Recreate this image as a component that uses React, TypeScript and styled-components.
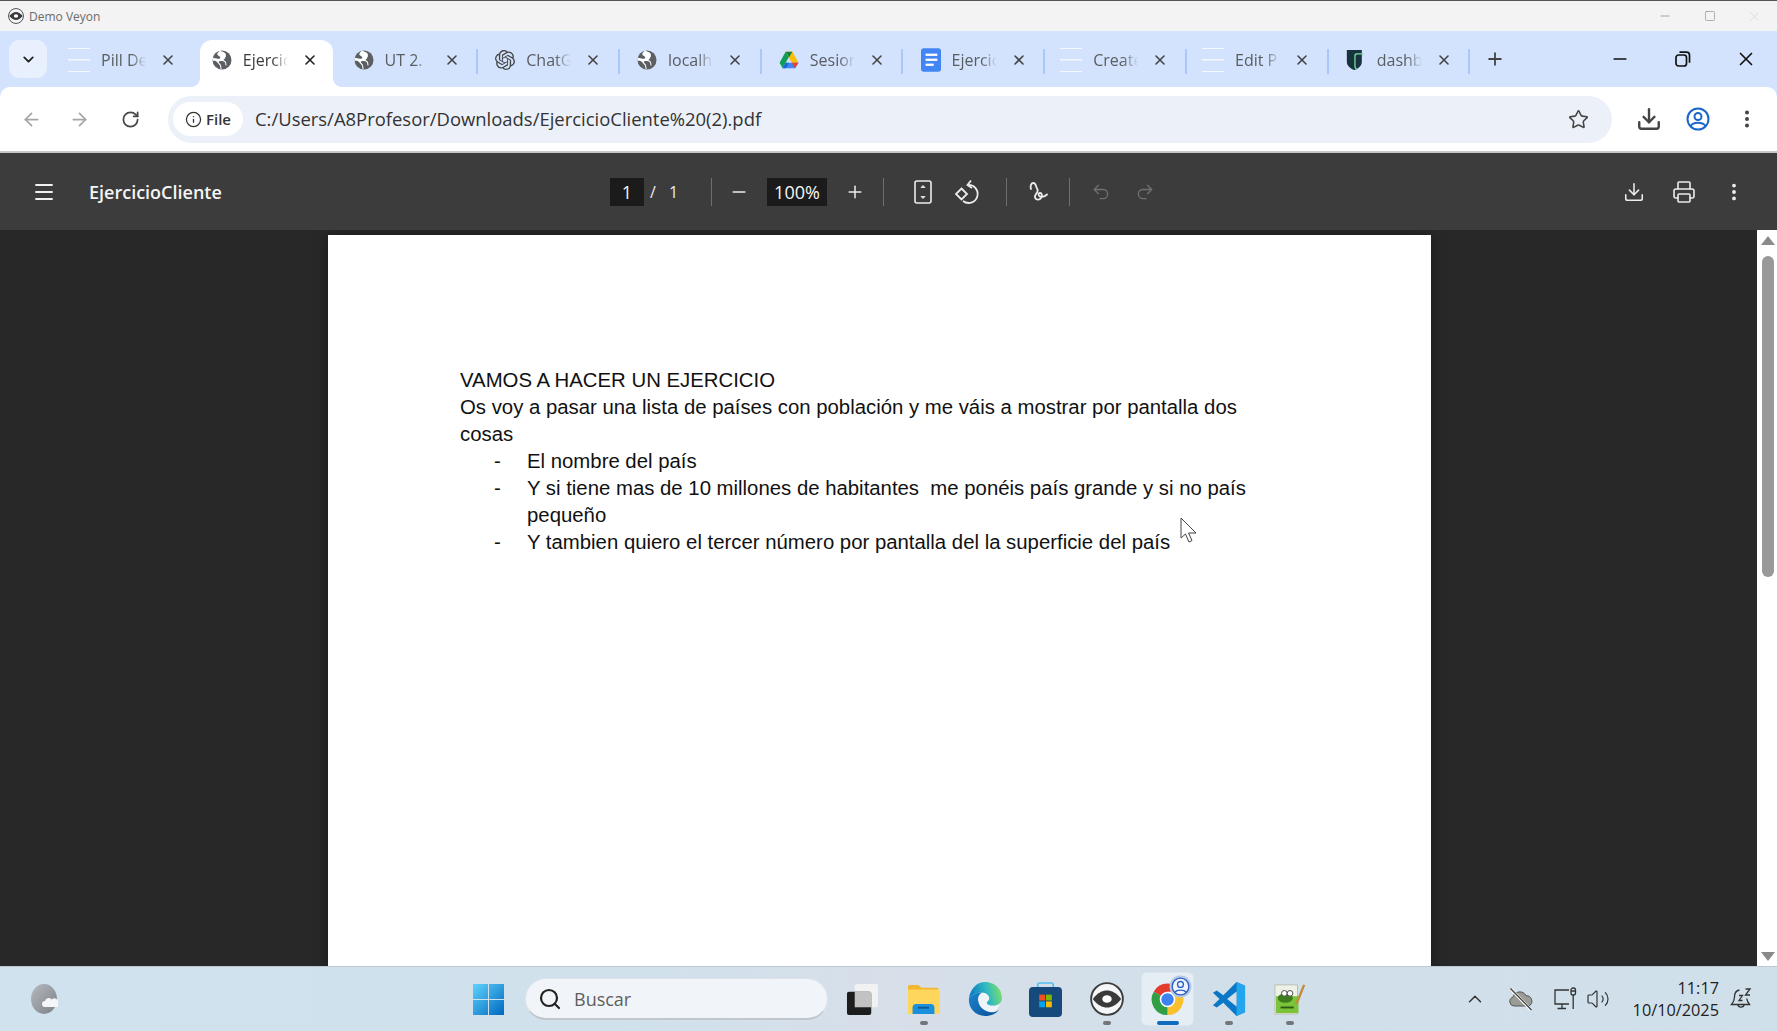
import { ReactNode } from "react";
import styled, { createGlobalStyle } from "styled-components";
import {
  ArrowLeft,
  ArrowRight,
  ChevronDown,
  ChevronUp,
  Download,
  Info,
  Menu,
  Minus,
  MoreVertical,
  Plus,
  Printer,
  Redo2,
  RotateCw,
  Search,
  Square,
  Star,
  Undo2,
  Volume2,
  X,
} from "lucide-react";
import { SiOpenai } from "react-icons/si";

const GlobalStyle = createGlobalStyle`
  html, body {
    margin: 0;
    padding: 0;
    width: 1777px;
    height: 1031px;
    overflow: hidden;
    background: #282828;
    font-family: "Open Sans", "Noto Sans", sans-serif;
  }
  * { box-sizing: border-box; }
`;

const Screen = styled.div`
  width: 1777px;
  height: 1031px;
  display: flex;
  flex-direction: column;
  border-top: 1px solid #555;
  overflow: hidden;
`;

const TitleBar = styled.div`
  height: 30px;
  flex: none;
  background: #f3f3f3;
  display: flex;
  align-items: center;
  padding-left: 8px;
  color: #6b6b6b;
  font-size: 12px;
`;

const TitleText = styled.span`
  margin-left: 5px;
`;

const TitleControls = styled.div`
  margin-left: auto;
  display: flex;
  color: #8a8a8a;
`;

const TitleControl = styled.div<{ $dim?: boolean }>`
  width: 45px;
  height: 30px;
  display: flex;
  align-items: center;
  justify-content: center;
  color: ${(p) => (p.$dim ? "#cfcfcf" : "#6f6f6f")};
`;

const ChromeFrame = styled.div`
  background: #d3e3fd;
  flex: none;
`;

const TabStrip = styled.div`
  height: 56px;
  display: flex;
  align-items: flex-start;
  padding: 9px 0 0 9px;
`;

const TabListButton = styled.div`
  width: 38px;
  height: 38px;
  margin-right: 5px;
  border-radius: 10px;
  background: #e9f0fd;
  display: flex;
  align-items: center;
  justify-content: center;
  color: #222;
`;

const Tab = styled.div<{ $active?: boolean; $divider?: boolean }>`
  position: relative;
  flex: none;
  width: 133px;
  height: 47px;
  margin: 0 2.75px 0 6px;
  padding: 0 0 7px 12px;
  display: flex;
  align-items: center;
  border-radius: 12px 12px 0 0;
  background: ${(p) => (p.$active ? "#fff" : "transparent")};

  &::after {
    content: ${(p) => (p.$divider ? '""' : "none")};
    position: absolute;
    right: -3.5px;
    top: 9px;
    width: 2px;
    height: 25px;
    background: #a8c7fa;
  }

  &::before {
    content: ${(p) => (p.$active ? '""' : "none")};
    position: absolute;
    left: -10px;
    right: -10px;
    bottom: 0;
    height: 10px;
    background:
      radial-gradient(circle at 0 0, transparent 10px, #fff 10.5px) left bottom / 10px 10px no-repeat,
      radial-gradient(circle at 100% 0, transparent 10px, #fff 10.5px) right bottom / 10px 10px no-repeat;
  }
`;

const Favicon = styled.div`
  width: 20px;
  height: 22px;
  flex: none;
  display: flex;
  align-items: center;
  justify-content: center;
`;

const BlankLines = styled.div`
  width: 22px;
  height: 24px;
  flex: none;
  margin: 0 -1px 0 -3px;
  border-top: 1.5px solid #f4f8ff;
  border-bottom: 1.5px solid #f4f8ff;
  background: linear-gradient(#f4f8ff, #f4f8ff) center / 100% 1.5px no-repeat;
`;

const TabTitle = styled.div<{ $active?: boolean }>`
  width: 45px;
  margin-left: 11px;
  overflow: hidden;
  white-space: nowrap;
  font-size: 16px;
  line-height: 22px;
  color: ${(p) => (p.$active ? "#3c3c3c" : "#5a5d61")};
  -webkit-mask-image: linear-gradient(to right, #000 66%, transparent 100%);
  mask-image: linear-gradient(to right, #000 66%, transparent 100%);
`;

const TabClose = styled.div<{ $active?: boolean }>`
  width: 16px;
  height: 16px;
  margin-left: 14px;
  flex: none;
  display: flex;
  align-items: center;
  justify-content: center;
  color: ${(p) => (p.$active ? "#222" : "#444")};
`;

const NewTab = styled.div`
  width: 50px;
  height: 38px;
  flex: none;
  display: flex;
  align-items: center;
  justify-content: center;
  color: #444;
`;

const WindowControls = styled.div`
  margin-left: auto;
  display: flex;
`;

const WindowControl = styled.div`
  width: 63px;
  height: 38px;
  display: flex;
  align-items: center;
  justify-content: center;
  color: #111;
`;

const Toolbar = styled.div`
  height: 64px;
  background: #fff;
  border-radius: 10px 10px 0 0;
  display: flex;
  align-items: center;
  padding: 0 5px 0 8px;
`;

const NavButton = styled.div<{ $muted?: boolean; $gap?: number }>`
  width: 46px;
  height: 40px;
  flex: none;
  margin-left: ${(p) => p.$gap ?? 0}px;
  display: flex;
  align-items: center;
  justify-content: center;
  color: ${(p) => (p.$muted ? "#a3a5a8" : "#474747")};
`;

const AddressBar = styled.div`
  flex: 1;
  height: 47px;
  margin: 0 13px 0 15px;
  padding: 0 23px 0 5px;
  border-radius: 24px;
  background: #ecf0f9;
  display: flex;
  align-items: center;
`;

const SiteChip = styled.div`
  width: 70px;
  height: 34px;
  border-radius: 17px;
  background: #fff;
  display: flex;
  align-items: center;
  justify-content: center;
  gap: 4px;
  font-size: 15px;
  font-weight: 600;
  color: #333;
`;

const UrlText = styled.div`
  margin-left: 12px;
  padding-bottom: 2px;
  font-size: 18.45px;
  color: #333;
  flex: 1;
  white-space: nowrap;
`;

const ActionButton = styled.div<{ $color?: string }>`
  width: 48px;
  height: 40px;
  flex: none;
  margin-right: 1px;
  display: flex;
  align-items: center;
  justify-content: center;
  color: ${(p) => p.$color ?? "#444"};
`;

const PdfBar = styled.div`
  height: 79px;
  flex: none;
  background: #3c3c3c;
  border-top: 2px solid #c7c7c7;
  display: flex;
  align-items: center;
  color: #f1f1f1;
`;

const PdfMenu = styled.div`
  width: 89px;
  flex: none;
  padding-left: 32px;
  display: flex;
  align-items: center;
`;

const PdfTitle = styled.div`
  width: 521px;
  flex: none;
  font-size: 18px;
  font-weight: 600;
  color: #f5f5f5;
`;

const BoxedValue = styled.div<{ $width: number; $gap?: number }>`
  width: ${(p) => p.$width}px;
  height: 28px;
  flex: none;
  margin: 0 ${(p) => p.$gap ?? 0}px;
  background: #1b1b1b;
  display: flex;
  align-items: center;
  justify-content: center;
  font-size: 18px;
  color: #f5f5f5;
`;

const PageTotal = styled.div`
  width: 61px;
  flex: none;
  padding-left: 6px;
  display: flex;
  font-size: 16px;
  color: #e8edf5;
  word-spacing: 9px;
`;

const Separator = styled.div<{ $left: number; $right: number }>`
  width: 1px;
  height: 28px;
  flex: none;
  margin: 0 ${(p) => p.$right}px 0 ${(p) => p.$left}px;
  background: #6e6e6e;
`;

const PdfButton = styled.div<{ $off?: boolean }>`
  width: 44px;
  height: 40px;
  flex: none;
  display: flex;
  align-items: center;
  justify-content: center;
  color: ${(p) => (p.$off ? "#707070" : "#ececec")};
`;

const PdfActions = styled.div`
  margin-left: auto;
  margin-right: 21px;
  display: flex;
  gap: 6px;
`;

const Viewer = styled.div`
  flex: 1;
  min-height: 0;
  display: flex;
  background: #282828;
`;

const PageArea = styled.div`
  flex: 1;
  display: flex;
  padding: 5px 0 0 328px;
  overflow: hidden;
`;

const Paper = styled.div`
  position: relative;
  width: 1103px;
  height: 1400px;
  flex: none;
  background: #fff;
  padding: 132px 0 0 132px;
  box-shadow: 0 0 14px rgba(0, 0, 0, 0.35);
  color: #111;
  font-family: "Liberation Sans", Arial, sans-serif;
  font-size: 20.35px;
  line-height: 27px;
`;

const DocLine = styled.div`
  white-space: pre;
`;

const DocList = styled.ul`
  list-style: none;
  margin: 0;
  padding: 0 0 0 67px;
  width: 800px;
`;

const DocItem = styled.li`
  position: relative;
  white-space: pre-wrap;

  &::before {
    content: "-";
    position: absolute;
    left: -33px;
  }
`;

const MouseCursor = styled.svg`
  position: absolute;
  left: 852px;
  top: 282px;
`;

const ScrollTrack = styled.div`
  width: 20px;
  flex: none;
  background: #fff;
  display: flex;
  flex-direction: column;
  align-items: center;
  padding: 6px 0 0 2px;
`;

const ScrollArrow = styled.div<{ $down?: boolean }>`
  width: 0;
  height: 0;
  flex: none;
  border-left: 7px solid transparent;
  border-right: 7px solid transparent;
  ${(p) => (p.$down ? "border-top: 9px solid #8a8a8a;" : "border-bottom: 9px solid #8a8a8a;")}
`;

const ScrollThumb = styled.div`
  width: 12px;
  height: 321px;
  flex: none;
  margin: 11px 0 auto;
  border-radius: 6px;
  background: #999;
`;

const ScrollEnd = styled.div`
  height: 5px;
  flex: none;
`;

const Taskbar = styled.div`
  height: 65px;
  flex: none;
  display: flex;
  align-items: center;
  border-top: 1px solid #bcc8d2;
  background: linear-gradient(90deg, #cfe2ed 0%, #d0e1ec 35%, #d7dfe9 50%, #d1dfea 70%, #d0e0eb 100%);
`;

const WeatherSlot = styled.div`
  width: 458px;
  flex: none;
  padding-left: 29px;
  display: flex;
  align-items: center;
`;

const StartSlot = styled.div`
  width: 60px;
  flex: none;
  display: flex;
  justify-content: center;
`;

const SearchBox = styled.div`
  width: 303px;
  height: 42px;
  flex: none;
  margin: 0 4px 0 7px;
  padding-left: 12px;
  border-radius: 21px;
  background: #f1f5f9;
  border: 1px solid #dde3e8;
  border-bottom: 2px solid #bfc6cc;
  display: flex;
  align-items: center;
  gap: 12px;
  color: #5e5e5e;
  font-size: 18px;
`;

const PinnedApp = styled.div<{ $active?: boolean }>`
  position: relative;
  width: ${(p) => (p.$active ? 51 : 61)}px;
  height: 52px;
  flex: none;
  margin: 0 ${(p) => (p.$active ? 5 : 0)}px;
  border-radius: 5px;
  display: flex;
  align-items: center;
  justify-content: center;
  background: ${(p) => (p.$active ? "#e6eef5" : "transparent")};
  box-shadow: ${(p) => (p.$active ? "0 0 0 1px #dde6ee" : "none")};
`;

const RunDot = styled.div<{ $active?: boolean }>`
  position: absolute;
  left: 50%;
  bottom: 0;
  transform: translateX(-50%);
  width: ${(p) => (p.$active ? 22 : 8)}px;
  height: 4px;
  border-radius: 2px;
  background: ${(p) => (p.$active ? "#0f6cbd" : "#73777c")};
`;

const Tray = styled.div`
  margin-left: auto;
  display: flex;
  align-items: center;
  color: #333;
`;

const TrayIcon = styled.div<{ $width: number }>`
  width: ${(p) => p.$width}px;
  flex: none;
  display: flex;
  justify-content: center;
`;

const Clock = styled.div`
  width: 109px;
  flex: none;
  text-align: right;
  font-size: 16.3px;
  line-height: 22px;
  color: #222;
`;

const BellSlot = styled.div`
  width: 58px;
  padding-right: 14px;
  flex: none;
  display: flex;
  justify-content: center;
`;

function GlobeIcon() {
  return (
    <svg width="20" height="20" viewBox="0 0 20 20">
      <circle cx="10" cy="10" r="9.5" fill="#5b5e62" />
      <path
        d="M8 .8c-1.400 1.200-2.700 2.200-2.700 3.500 0 1.100 1.500 1.500 2.600 2.400 1 .8.300 2-.8 2.100-1.700.2-3.300-1.200-6.200-.8L.5 11c1.800-.5 3.200-.3 4.500 1.100 1.200 1.300 1.900 2.600 3 3.200l.6 3.800h1l-.6-4c-.5-1.300-2.300-2.100-2.300-3.300 0-.8 2.600-.8 4.300-.6 1.300.2 2.100 1.200 2.300 2.400l.2 2h1l-.2-2.200c-.2-1.700-1.400-3-3-3.300 1.700-1.500 2.900-3.300 2.600-5.600-.1-1.200-2-2.500-5.500-3.700z"
        fill="#fff"
      />
    </svg>
  );
}

function DriveIcon() {
  return (
    <svg width="22" height="20" viewBox="0 0 22 20">
      <path d="M7.300 1 .6 13l3.400 6L10.800 7z" fill="#0f9d58" />
      <path d="M7.300 1h7.400l6.700 12H14z" fill="#fbbc04" />
      <path d="M4 19h13.700l3.700-6H7.400z" fill="#4285f4" />
      <path d="M7.300 1h7.400L11 7.300z" fill="#188038" />
      <path d="M17.700 19l3.700-6H14z" fill="#ea4335" />
      <path d="M7.400 13 4 19h3.500L11 13z" fill="#1967d2" />
    </svg>
  );
}

function DocsIcon() {
  return (
    <svg width="22" height="26" viewBox="0 0 22 26">
      <rect x="0" y="0" width="22" height="26" rx="3" fill="#4285f4" />
      <rect x="5" y="6" width="13" height="2.500" fill="#fff" />
      <rect x="5" y="11.500" width="13" height="2.500" fill="#fff" />
      <rect x="5" y="17" width="9" height="2.500" fill="#fff" />
    </svg>
  );
}

function ShieldIcon() {
  return (
    <svg width="24" height="26" viewBox="0 0 24 26">
      <path d="M1 1h18v14c0 5-4 8-9 10-5-2-9-5-9-10z" fill="#17333d" />
      <path d="M10 8c0-2 1-3 3-3h8v1.500h-7c-1.500 0-2.500.8-2.500 2v11c0 2 .5 3 2 4l-1 1.500c-2-1.200-2.500-3-2.500-5z" fill="#7fe0a8" />
    </svg>
  );
}

function VeyonMark({ size }: { size: number }) {
  return (
    <svg width={size} height={size} viewBox="0 0 36 36">
      <circle cx="18" cy="18" r="16.800" fill="#f4f6f8" stroke="#3d3d3d" strokeWidth="2" />
      <path d="M3 18c5-6.500 10-9 15-9s10 2.500 15 9c-5 6.500-10 9-15 9S8 24.500 3 18z" fill="#3a3a3a" />
      <ellipse cx="18" cy="18" rx="5" ry="4" fill="#fff" />
    </svg>
  );
}

function WindowsIcon() {
  return (
    <svg width="33" height="33" viewBox="0 0 34 34">
      <defs>
        <linearGradient id="win" x1="0" y1="0" x2="1" y2="1">
          <stop offset="0" stopColor="#5fd3fb" />
          <stop offset="1" stopColor="#0067c0" />
        </linearGradient>
      </defs>
      <path d="M1 1h15.500v15.500H1zM17.500 1H33v15.500H17.500zM1 17.500h15.500V33H1zM17.500 17.500H33V33H17.500z" fill="url(#win)" />
    </svg>
  );
}

function TaskViewIcon() {
  return (
    <svg width="33" height="33" viewBox="0 0 34 34">
      <rect x="9" y="1" width="24" height="24" rx="2" fill="#f2f2f2" />
      <rect x="1" y="9" width="25" height="24" rx="2" fill="#1d1d1d" />
      <rect x="9" y="9" width="17" height="16" fill="#c2c2c2" />
    </svg>
  );
}

function ExplorerIcon() {
  return (
    <svg width="33" height="31" viewBox="0 0 36 34">
      <path d="M1 3a2 2 0 0 1 2-2h9l4 3h18a2 2 0 0 1 0 2v26H1z" fill="#f2b62f" />
      <rect x="1" y="6" width="35" height="27" rx="1.500" fill="#ffd65c" />
      <path d="M6 33v-7a4 4 0 0 1 4-4h16a4 4 0 0 1 4 4v7z" fill="#1a8fdc" />
      <rect x="12" y="25" width="12" height="2" fill="#0b5a95" />
    </svg>
  );
}

function EdgeIcon() {
  return (
    <svg width="34" height="34" viewBox="0 0 36 36">
      <defs>
        <linearGradient id="edgeTop" x1="0" y1="0.6" x2="1" y2="0.4">
          <stop offset="0" stopColor="#0c74bd" />
          <stop offset="0.55" stopColor="#2db8c4" />
          <stop offset="1" stopColor="#7fe06a" />
        </linearGradient>
        <linearGradient id="edgeBody" x1="0" y1="0" x2="1" y2="1">
          <stop offset="0" stopColor="#1a86d0" />
          <stop offset="1" stopColor="#0b4f96" />
        </linearGradient>
      </defs>
      <path d="M15 11c4 0 8 3 7.500 7-.5 2-2.500 3-2.500 4 0 2 3 3 7 3 3 0 6-1 7-3-1 4-3 9-9 10-7 0-13-5-14-11-1-4 0-8 4-10z" fill="#eef4f8" />
      <path d="M1 17C3 6 10 0 18 0c10 0 18 7 18 17 0 5-4 8-9 8-4 0-7-1-7-3 0-1 2-2 2.500-4 .5-4-3.500-7-7.500-7-6 0-11 2-14 6z" fill="url(#edgeTop)" />
      <path d="M1 17c3-4 8-6 14-6-4 2-5 6-4 10 1 6 7 11 14 11 3 0 6-1 8-3-3 4-8 7-15 7C8 36 0 28 1 17z" fill="url(#edgeBody)" />
    </svg>
  );
}

function StoreIcon() {
  return (
    <svg width="33" height="35" viewBox="0 0 34 36">
      <path d="M9 6V3a2 2 0 0 1 2-2h12a2 2 0 0 1 2 2v3" fill="none" stroke="#4fc1f0" strokeWidth="1.800" />
      <rect x="0" y="5" width="34" height="31" rx="4" fill="#174a7c" />
      <rect x="10.500" y="13" width="6" height="6" fill="#f25022" />
      <rect x="17.500" y="13" width="6" height="6" fill="#7fba00" />
      <rect x="10.500" y="20" width="6" height="6" fill="#00a4ef" />
      <rect x="17.500" y="20" width="6" height="6" fill="#ffb900" />
    </svg>
  );
}

function ChromeIcon() {
  return (
    <svg width="33" height="33" viewBox="0 0 36 36">
      <path d="M18 18 3 9.500A17 17 0 0 1 33 9.500H18z" fill="#e33b2e" />
      <path d="M18 18 33 9.500A17 17 0 0 1 18 35z" fill="#fbc02d" />
      <path d="M18 18v17A17 17 0 0 1 3 9.500z" fill="#2f9e44" />
      <circle cx="18" cy="18" r="8.500" fill="#fff" />
      <circle cx="18" cy="18" r="6.800" fill="#3e82f1" />
    </svg>
  );
}

function ProfileBadge() {
  return (
    <svg width="23" height="23" viewBox="0 0 22 22">
      <circle cx="11" cy="11" r="10.500" fill="#b7c7e6" />
      <circle cx="11" cy="11" r="8" fill="#eef3fc" stroke="#2d62c4" strokeWidth="1.300" />
      <circle cx="11" cy="9" r="2.800" fill="none" stroke="#2d62c4" strokeWidth="1.300" />
      <path d="M5.500 16.500c2-2.800 9-2.800 11 0" fill="none" stroke="#2d62c4" strokeWidth="1.300" />
    </svg>
  );
}

const ChromeBadge = styled.div`
  position: absolute;
  top: 2px;
  right: 1px;
`;

function VsCodeIcon() {
  return (
    <svg width="34" height="34" viewBox="0 0 36 36">
      <path d="M26 0 12 14 5 9l-4 2.500L8 18l-7 6.500L5 27l7-5 14 14 9-4V4z" fill="#0a78c7" />
      <path d="M26 0v36l9-4V4z" fill="#24a6ee" />
      <path d="M26 10v16l-10-8z" fill="#d3e0ea" />
    </svg>
  );
}

function NotepadIcon() {
  return (
    <svg width="32" height="32" viewBox="0 0 34 34">
      <rect x="1" y="2" width="24" height="31" fill="#eef2e6" stroke="#b9beb0" />
      <rect x="2" y="14" width="24" height="18" fill="#7cc23a" />
      <ellipse cx="12" cy="16" rx="8" ry="5" fill="#3e7d1d" />
      <circle cx="11" cy="11" r="3" fill="#fff" stroke="#444" />
      <circle cx="17" cy="11" r="3" fill="#fff" stroke="#444" />
      <path d="M7 26h14" stroke="#2c5c14" strokeWidth="2" />
      <path d="M24 22 32 2" stroke="#c48a3a" strokeWidth="2.500" />
    </svg>
  );
}

function WeatherIcon() {
  return (
    <svg width="30" height="32" viewBox="0 0 30 32">
      <defs>
        <linearGradient id="moon" x1="0" y1="0" x2="1" y2="1">
          <stop offset="0" stopColor="#b5bac0" />
          <stop offset="1" stopColor="#7d8186" />
        </linearGradient>
      </defs>
      <ellipse cx="15" cy="16" rx="13" ry="15" fill="url(#moon)" />
      <path d="M16 24a3 3 0 0 1 0-6 4 4 0 0 1 7-1.500 3.500 3.500 0 0 1 6 3V24z" fill="#f4f6f8" />
    </svg>
  );
}

function OneDriveOff() {
  return (
    <svg width="26" height="24" viewBox="0 0 26 24">
      <path d="M6 19a4.500 4.500 0 0 1-1-8.800 7 7 0 0 1 13-1.500 5.500 5.500 0 0 1 3 10.300z" fill="#9c9c96" stroke="#555" strokeWidth="1" />
      <path d="M3 2l20 21" stroke="#fff" strokeWidth="3" />
      <path d="M2.500 1.500l21 21.500" stroke="#444" strokeWidth="1.400" />
    </svg>
  );
}

function NetworkIcon() {
  return (
    <svg width="24" height="24" viewBox="0 0 24 24" fill="none" stroke="#333" strokeWidth="1.300">
      <path d="M16 3H2v14h14" />
      <path d="M9 17v4M4.500 21.500H13" />
      <rect x="18" y="1" width="4.500" height="7" rx="2" />
      <path d="M20.200 8v14M18 4h4.500" />
    </svg>
  );
}

function BellZzz() {
  return (
    <svg width="22" height="24" viewBox="0 0 22 24" fill="none" stroke="#333" strokeWidth="1.300">
      <path d="M9.500 3C6 3.500 4.500 6.500 4.500 10c0 3-1 5-3 7.500h18c-1.500-2-2.500-3.800-2.800-6" />
      <path d="M8 17.500c0 3.500 6 3.500 6 0" />
      <path d="M9 8.500h3.500L9 13.500h3.500" />
      <path d="M15.500 2h4.500l-4.500 6H20" />
    </svg>
  );
}

function FitPageIcon() {
  return (
    <svg width="18" height="24" viewBox="0 0 18 24" fill="none" stroke="currentColor" strokeWidth="1.600">
      <rect x="1" y="1" width="16" height="22" rx="2" />
      <path d="M7 7.500 9 5.500l2 2zM7 16.500l2 2 2-2z" fill="currentColor" strokeWidth="0.800" />
    </svg>
  );
}

function RotatePageIcon() {
  return (
    <svg width="26" height="26" viewBox="0 0 26 26" fill="none" stroke="currentColor" strokeWidth="1.800">
      <path d="M14 6a9 9 0 1 1-5 16" />
      <path d="M17 1.500 13.500 6l4.500 3" />
      <path d="M7.500 9.500 13 15l-5.500 5.500L2 15z" />
    </svg>
  );
}

function DrawIcon() {
  return (
    <svg width="24" height="24" viewBox="0 0 24 24" fill="none" stroke="currentColor" strokeWidth="1.800" strokeLinecap="round">
      <path d="M5 9c-1-3 0-6 2.500-6 2.500 0 2 3 4 6.500 1.500 3-3.500 5-2.500 8 .7 2.500 4.500 3 6 .5 1.500-2.500 1-5-1-5-2.500 0-1.500 4 1.500 4 2 0 4-1 5.500-2.500" />
    </svg>
  );
}

function Cursor() {
  return (
    <MouseCursor width="18" height="26" viewBox="0 0 18 26">
      <path d="M1 1v20l4.500-4 3.500 8 3-1.500-3.500-7.500H16z" fill="#fff" stroke="#444" strokeWidth="1" />
    </MouseCursor>
  );
}

type TabItem = { icon: ReactNode; title: string; active?: boolean; divider?: boolean };

const tabs: TabItem[] = [
  { icon: <BlankLines />, title: "Pill De" },
  { icon: <GlobeIcon />, title: "Ejercicio", active: true },
  { icon: <GlobeIcon />, title: "UT 2. ", divider: true },
  { icon: <SiOpenai size={20} color="#444" />, title: "ChatGPT", divider: true },
  { icon: <GlobeIcon />, title: "localhost", divider: true },
  { icon: <DriveIcon />, title: "Sesiones", divider: true },
  { icon: <DocsIcon />, title: "Ejercicio", divider: true },
  { icon: <BlankLines />, title: "Create", divider: true },
  { icon: <BlankLines />, title: "Edit P", divider: true },
  { icon: <ShieldIcon />, title: "dashboard", divider: true },
];

const docLines = [
  "VAMOS A HACER UN EJERCICIO",
  "Os voy a pasar una lista de países con población y me váis a mostrar por pantalla dos",
  "cosas",
];

const docItems = [
  "El nombre del país",
  "Y si tiene mas de 10 millones de habitantes  me ponéis país grande y si no país\npequeño",
  "Y tambien quiero el tercer número por pantalla del la superficie del país",
];

const pinned: { key: string; icon: ReactNode; dot?: boolean; active?: boolean; badge?: boolean }[] = [
  { key: "view", icon: <TaskViewIcon /> },
  { key: "files", icon: <ExplorerIcon />, dot: true },
  { key: "edge", icon: <EdgeIcon /> },
  { key: "store", icon: <StoreIcon /> },
  { key: "veyon", icon: <VeyonMark size={34} />, dot: true },
  { key: "chrome", icon: <ChromeIcon />, dot: true, active: true, badge: true },
  { key: "code", icon: <VsCodeIcon />, dot: true },
  { key: "npp", icon: <NotepadIcon />, dot: true },
];

export default function App() {
  return (
    <>
      <GlobalStyle />
      <Screen>
        <TitleBar>
          <VeyonMark size={16} />
          <TitleText>Demo Veyon</TitleText>
          <TitleControls>
            <TitleControl>
              <Minus size={14} strokeWidth={1} />
            </TitleControl>
            <TitleControl>
              <Square size={12} strokeWidth={1} />
            </TitleControl>
            <TitleControl $dim>
              <X size={15} strokeWidth={1} />
            </TitleControl>
          </TitleControls>
        </TitleBar>

        <ChromeFrame>
          <TabStrip>
            <TabListButton>
              <ChevronDown size={17} strokeWidth={2.6} />
            </TabListButton>
            {tabs.map((tab, i) => (
              <Tab key={i} $active={tab.active} $divider={tab.divider}>
                <Favicon>{tab.icon}</Favicon>
                <TabTitle $active={tab.active}>{tab.title}</TabTitle>
                <TabClose $active={tab.active}>
                  <X size={16} strokeWidth={2.4} />
                </TabClose>
              </Tab>
            ))}
            <NewTab>
              <Plus size={20} strokeWidth={2.2} />
            </NewTab>
            <WindowControls>
              <WindowControl>
                <Minus size={20} strokeWidth={2} />
              </WindowControl>
              <WindowControl>
                <svg width="16" height="16" viewBox="0 0 16 16" fill="none" stroke="currentColor" strokeWidth="1.700">
                  <rect x="1" y="4" width="10.500" height="11" rx="2.500" />
                  <path d="M4.500 1.200h7a3 3 0 0 1 3 3v7.500" />
                </svg>
              </WindowControl>
              <WindowControl>
                <X size={22} strokeWidth={1.8} />
              </WindowControl>
            </WindowControls>
          </TabStrip>

          <Toolbar>
            <NavButton $muted>
              <ArrowLeft size={21} strokeWidth={2} />
            </NavButton>
            <NavButton $muted $gap={2}>
              <ArrowRight size={21} strokeWidth={2} />
            </NavButton>
            <NavButton $gap={5}>
              <RotateCw size={19} strokeWidth={2.2} />
            </NavButton>
            <AddressBar>
              <SiteChip>
                <Info size={17} strokeWidth={1.8} />
                File
              </SiteChip>
              <UrlText>C:/Users/A8Profesor/Downloads/EjercicioCliente%20(2).pdf</UrlText>
              <Star size={21} strokeWidth={1.8} color="#444" />
            </AddressBar>
            <ActionButton>
              <Download size={26} strokeWidth={2.2} />
            </ActionButton>
            <ActionButton $color="#1a66c9">
              <svg width="24" height="24" viewBox="0 0 24 24" fill="none" stroke="currentColor" strokeWidth="2">
                <circle cx="12" cy="12" r="10.500" />
                <circle cx="12" cy="9.500" r="3.500" />
                <path d="M4.500 19c2.500-4.500 12.500-4.500 15 0" />
              </svg>
            </ActionButton>
            <ActionButton>
              <MoreVertical size={22} strokeWidth={2.4} />
            </ActionButton>
          </Toolbar>
        </ChromeFrame>

        <PdfBar>
          <PdfMenu>
            <Menu size={24} strokeWidth={1.8} />
          </PdfMenu>
          <PdfTitle>EjercicioCliente</PdfTitle>
          <BoxedValue $width={34}>1</BoxedValue>
          <PageTotal>/ 1</PageTotal>
          <Separator $left={6} $right={5} />
          <PdfButton>
            <Minus size={20} strokeWidth={1.8} />
          </PdfButton>
          <BoxedValue $width={60} $gap={6}>100%</BoxedValue>
          <PdfButton>
            <Plus size={20} strokeWidth={1.8} />
          </PdfButton>
          <Separator $left={6} $right={17} />
          <PdfButton>
            <FitPageIcon />
          </PdfButton>
          <PdfButton>
            <RotatePageIcon />
          </PdfButton>
          <Separator $left={17} $right={9} />
          <PdfButton>
            <DrawIcon />
          </PdfButton>
          <Separator $left={9} $right={9} />
          <PdfButton $off>
            <Undo2 size={20} strokeWidth={1.6} />
          </PdfButton>
          <PdfButton $off>
            <Redo2 size={20} strokeWidth={1.6} />
          </PdfButton>
          <PdfActions>
            <PdfButton>
              <Download size={22} strokeWidth={1.7} />
            </PdfButton>
            <PdfButton>
              <Printer size={24} strokeWidth={1.6} />
            </PdfButton>
            <PdfButton>
              <MoreVertical size={22} strokeWidth={2.2} />
            </PdfButton>
          </PdfActions>
        </PdfBar>

        <Viewer>
          <PageArea>
            <Paper>
              {docLines.map((line) => (
                <DocLine key={line}>{line}</DocLine>
              ))}
              <DocList>
                {docItems.map((item) => (
                  <DocItem key={item}>{item}</DocItem>
                ))}
              </DocList>
              <Cursor />
            </Paper>
          </PageArea>
          <ScrollTrack>
            <ScrollArrow />
            <ScrollThumb />
            <ScrollArrow $down />
            <ScrollEnd />
          </ScrollTrack>
        </Viewer>

        <Taskbar>
          <WeatherSlot>
            <WeatherIcon />
          </WeatherSlot>
          <StartSlot>
            <WindowsIcon />
          </StartSlot>
          <SearchBox>
            <Search size={24} strokeWidth={2.2} color="#222" />
            Buscar
          </SearchBox>
          {pinned.map((app) => (
            <PinnedApp key={app.key} $active={app.active}>
              {app.icon}
              {app.badge && (
                <ChromeBadge>
                  <ProfileBadge />
                </ChromeBadge>
              )}
              {app.dot && <RunDot $active={app.active} />}
            </PinnedApp>
          ))}
          <Tray>
            <TrayIcon $width={46}>
              <ChevronUp size={22} strokeWidth={1.6} />
            </TrayIcon>
            <TrayIcon $width={46}>
              <OneDriveOff />
            </TrayIcon>
            <TrayIcon $width={42}>
              <NetworkIcon />
            </TrayIcon>
            <TrayIcon $width={24}>
              <Volume2 size={24} strokeWidth={1.2} />
            </TrayIcon>
            <Clock>
              11:17
              <br />
              10/10/2025
            </Clock>
            <BellSlot>
              <BellZzz />
            </BellSlot>
          </Tray>
        </Taskbar>
      </Screen>
    </>
  );
}
